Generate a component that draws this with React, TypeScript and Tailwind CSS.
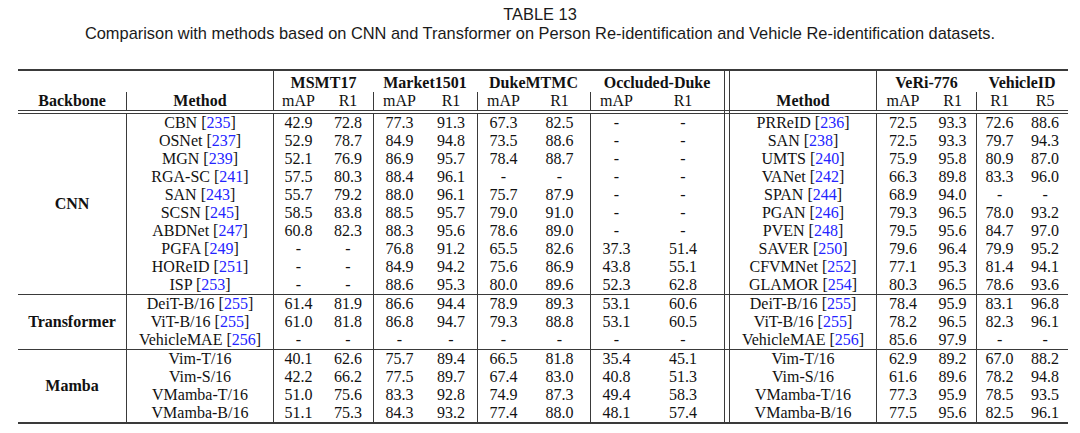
type Row = {
  m: string;
  r?: string;
  v: string[];
  m2: string;
  r2?: string;
  w: string[];
};

const groups: { name: string; rows: Row[] }[] = [
  {
    name: "CNN",
    rows: [
      { m: "CBN", r: "235", v: ["42.9", "72.8", "77.3", "91.3", "67.3", "82.5", "-", "-"], m2: "PRReID", r2: "236", w: ["72.5", "93.3", "72.6", "88.6"] },
      { m: "OSNet", r: "237", v: ["52.9", "78.7", "84.9", "94.8", "73.5", "88.6", "-", "-"], m2: "SAN", r2: "238", w: ["72.5", "93.3", "79.7", "94.3"] },
      { m: "MGN", r: "239", v: ["52.1", "76.9", "86.9", "95.7", "78.4", "88.7", "-", "-"], m2: "UMTS", r2: "240", w: ["75.9", "95.8", "80.9", "87.0"] },
      { m: "RGA-SC", r: "241", v: ["57.5", "80.3", "88.4", "96.1", "-", "-", "-", "-"], m2: "VANet", r2: "242", w: ["66.3", "89.8", "83.3", "96.0"] },
      { m: "SAN", r: "243", v: ["55.7", "79.2", "88.0", "96.1", "75.7", "87.9", "-", "-"], m2: "SPAN", r2: "244", w: ["68.9", "94.0", "-", "-"] },
      { m: "SCSN", r: "245", v: ["58.5", "83.8", "88.5", "95.7", "79.0", "91.0", "-", "-"], m2: "PGAN", r2: "246", w: ["79.3", "96.5", "78.0", "93.2"] },
      { m: "ABDNet", r: "247", v: ["60.8", "82.3", "88.3", "95.6", "78.6", "89.0", "-", "-"], m2: "PVEN", r2: "248", w: ["79.5", "95.6", "84.7", "97.0"] },
      { m: "PGFA", r: "249", v: ["-", "-", "76.8", "91.2", "65.5", "82.6", "37.3", "51.4"], m2: "SAVER", r2: "250", w: ["79.6", "96.4", "79.9", "95.2"] },
      { m: "HOReID", r: "251", v: ["-", "-", "84.9", "94.2", "75.6", "86.9", "43.8", "55.1"], m2: "CFVMNet", r2: "252", w: ["77.1", "95.3", "81.4", "94.1"] },
      { m: "ISP", r: "253", v: ["-", "-", "88.6", "95.3", "80.0", "89.6", "52.3", "62.8"], m2: "GLAMOR", r2: "254", w: ["80.3", "96.5", "78.6", "93.6"] },
    ],
  },
  {
    name: "Transformer",
    rows: [
      { m: "DeiT-B/16", r: "255", v: ["61.4", "81.9", "86.6", "94.4", "78.9", "89.3", "53.1", "60.6"], m2: "DeiT-B/16", r2: "255", w: ["78.4", "95.9", "83.1", "96.8"] },
      { m: "ViT-B/16", r: "255", v: ["61.0", "81.8", "86.8", "94.7", "79.3", "88.8", "53.1", "60.5"], m2: "ViT-B/16", r2: "255", w: ["78.2", "96.5", "82.3", "96.1"] },
      { m: "VehicleMAE", r: "256", v: ["-", "-", "-", "-", "-", "-", "-", "-"], m2: "VehicleMAE", r2: "256", w: ["85.6", "97.9", "-", "-"] },
    ],
  },
  {
    name: "Mamba",
    rows: [
      { m: "Vim-T/16", v: ["40.1", "62.6", "75.7", "89.4", "66.5", "81.8", "35.4", "45.1"], m2: "Vim-T/16", w: ["62.9", "89.2", "67.0", "88.2"] },
      { m: "Vim-S/16", v: ["42.2", "66.2", "77.5", "89.7", "67.4", "83.0", "40.8", "51.3"], m2: "Vim-S/16", w: ["61.6", "89.6", "78.2", "94.8"] },
      { m: "VMamba-T/16", v: ["51.0", "75.6", "83.3", "92.8", "74.9", "87.3", "49.4", "58.3"], m2: "VMamba-T/16", w: ["77.3", "95.9", "78.5", "93.5"] },
      { m: "VMamba-B/16", v: ["51.1", "75.3", "84.3", "93.2", "77.4", "88.0", "48.1", "57.4"], m2: "VMamba-B/16", w: ["77.5", "95.6", "82.5", "96.1"] },
    ],
  },
];

function Cite({ name, r }: { name: string; r?: string }) {
  if (!r) return <>{name}</>;
  return (
    <>
      {name} [<span className="text-[#2424ff]">{r}</span>]
    </>
  );
}

const cell = "p-0 text-center whitespace-nowrap leading-[18px]";
const line = "border-[#3a3a3a]";
// left border before each dataset column pair
const splitL = [true, false, true, false, true, false, true, false];

export default function App() {
  return (
    <div className="w-[1080px] h-[433px] bg-white overflow-hidden text-[#111]">
      <div className="pt-[5px] text-center text-[16.4px] leading-[19px] text-[#1a1a1a] font-['Liberation_Sans',Arial,sans-serif]">
        <div>TABLE 13</div>
        <div>
          Comparison with methods based on CNN and Transformer on Person Re-identification and Vehicle Re-identification datasets.
        </div>
      </div>

      <table className="ml-[18px] mt-[26px] table-fixed border-separate border-spacing-0 w-[1050px] text-[16px] font-['Liberation_Serif','Times_New_Roman',serif]">
        <colgroup>
          <col className="w-[108px]" />
          <col className="w-[147px]" />
          <col className="w-[50px]" />
          <col className="w-[50px]" />
          <col className="w-[52px]" />
          <col className="w-[52px]" />
          <col className="w-[52px]" />
          <col className="w-[61px]" />
          <col className="w-[52px]" />
          <col className="w-[82px]" />
          <col className="w-[6px]" />
          <col className="w-[146px]" />
          <col className="w-[53px]" />
          <col className="w-[47px]" />
          <col className="w-[46px]" />
          <col className="w-[46px]" />
        </colgroup>
        <thead>
          <tr className="h-[23px]">
            <td colSpan={2} className={`${cell} border-t-2 ${line}`} />
            {["MSMT17", "Market1501", "DukeMTMC", "Occluded-Duke"].map((d, i) => (
              <td
                key={d}
                colSpan={2}
                className={`${cell} align-bottom font-bold border-t-2 ${line} ${i === 0 ? "border-l" : ""}`}
              >
                {d}
              </td>
            ))}
            <td className={`${cell} border-t-2 border-l border-r ${line}`} />
            <td className={`${cell} border-t-2 ${line}`} />
            <td colSpan={2} className={`${cell} align-bottom font-bold border-t-2 border-l ${line}`}>
              VeRi-776
            </td>
            <td colSpan={2} className={`${cell} align-bottom font-bold border-t-2 ${line}`}>
              VehicleID
            </td>
          </tr>
          <tr>
            <td className={`${cell} font-bold border-b ${line}`}>Backbone</td>
            <td className={`${cell} font-bold border-b border-l ${line}`}>Method</td>
            {["mAP", "R1", "mAP", "R1", "mAP", "R1", "mAP", "R1"].map((h, i) => (
              <td key={i} className={`${cell} border-b ${line} ${splitL[i] ? "border-l" : ""}`}>
                {h}
              </td>
            ))}
            <td className={`${cell} border-b border-l border-r ${line}`} />
            <td className={`${cell} font-bold border-b ${line}`}>Method</td>
            <td className={`${cell} border-b border-l ${line}`}>mAP</td>
            <td className={`${cell} border-b ${line}`}>R1</td>
            <td className={`${cell} border-b border-l ${line}`}>R1</td>
            <td className={`${cell} border-b ${line}`}>R5</td>
          </tr>
          <tr className="h-[3px]">
            <td colSpan={10} className={`p-0 h-[3px] border-b ${line}`} />
            <td className={`p-0 h-[3px] border-b border-l border-r ${line}`} />
            <td colSpan={5} className={`p-0 h-[3px] border-b ${line}`} />
          </tr>
        </thead>
        <tbody>
          {groups.map((g, gi) =>
            g.rows.map((row, ri) => {
              const last = ri === g.rows.length - 1;
              const bottom = last ? (gi === groups.length - 1 ? `border-b-2 ${line}` : `border-b ${line}`) : "";
              return (
                <tr key={g.name + ri}>
                  {ri === 0 && (
                    <td
                      rowSpan={g.rows.length}
                      className={`${cell} font-bold align-middle ${gi === groups.length - 1 ? "border-b-2" : "border-b"} ${line}`}
                    >
                      {g.name}
                    </td>
                  )}
                  <td className={`${cell} border-l ${line} ${bottom}`}>
                    <Cite name={row.m} r={row.r} />
                  </td>
                  {row.v.map((x, i) => (
                    <td key={i} className={`${cell} ${line} ${splitL[i] ? "border-l" : ""} ${bottom}`}>
                      {x}
                    </td>
                  ))}
                  <td className={`${cell} border-l border-r ${line} ${bottom}`} />
                  <td className={`${cell} ${bottom}`}>
                    <Cite name={row.m2} r={row.r2} />
                  </td>
                  {row.w.map((x, i) => (
                    <td key={i} className={`${cell} ${line} ${i % 2 === 0 ? "border-l" : ""} ${bottom}`}>
                      {x}
                    </td>
                  ))}
                </tr>
              );
            })
          )}
        </tbody>
      </table>
    </div>
  );
}
